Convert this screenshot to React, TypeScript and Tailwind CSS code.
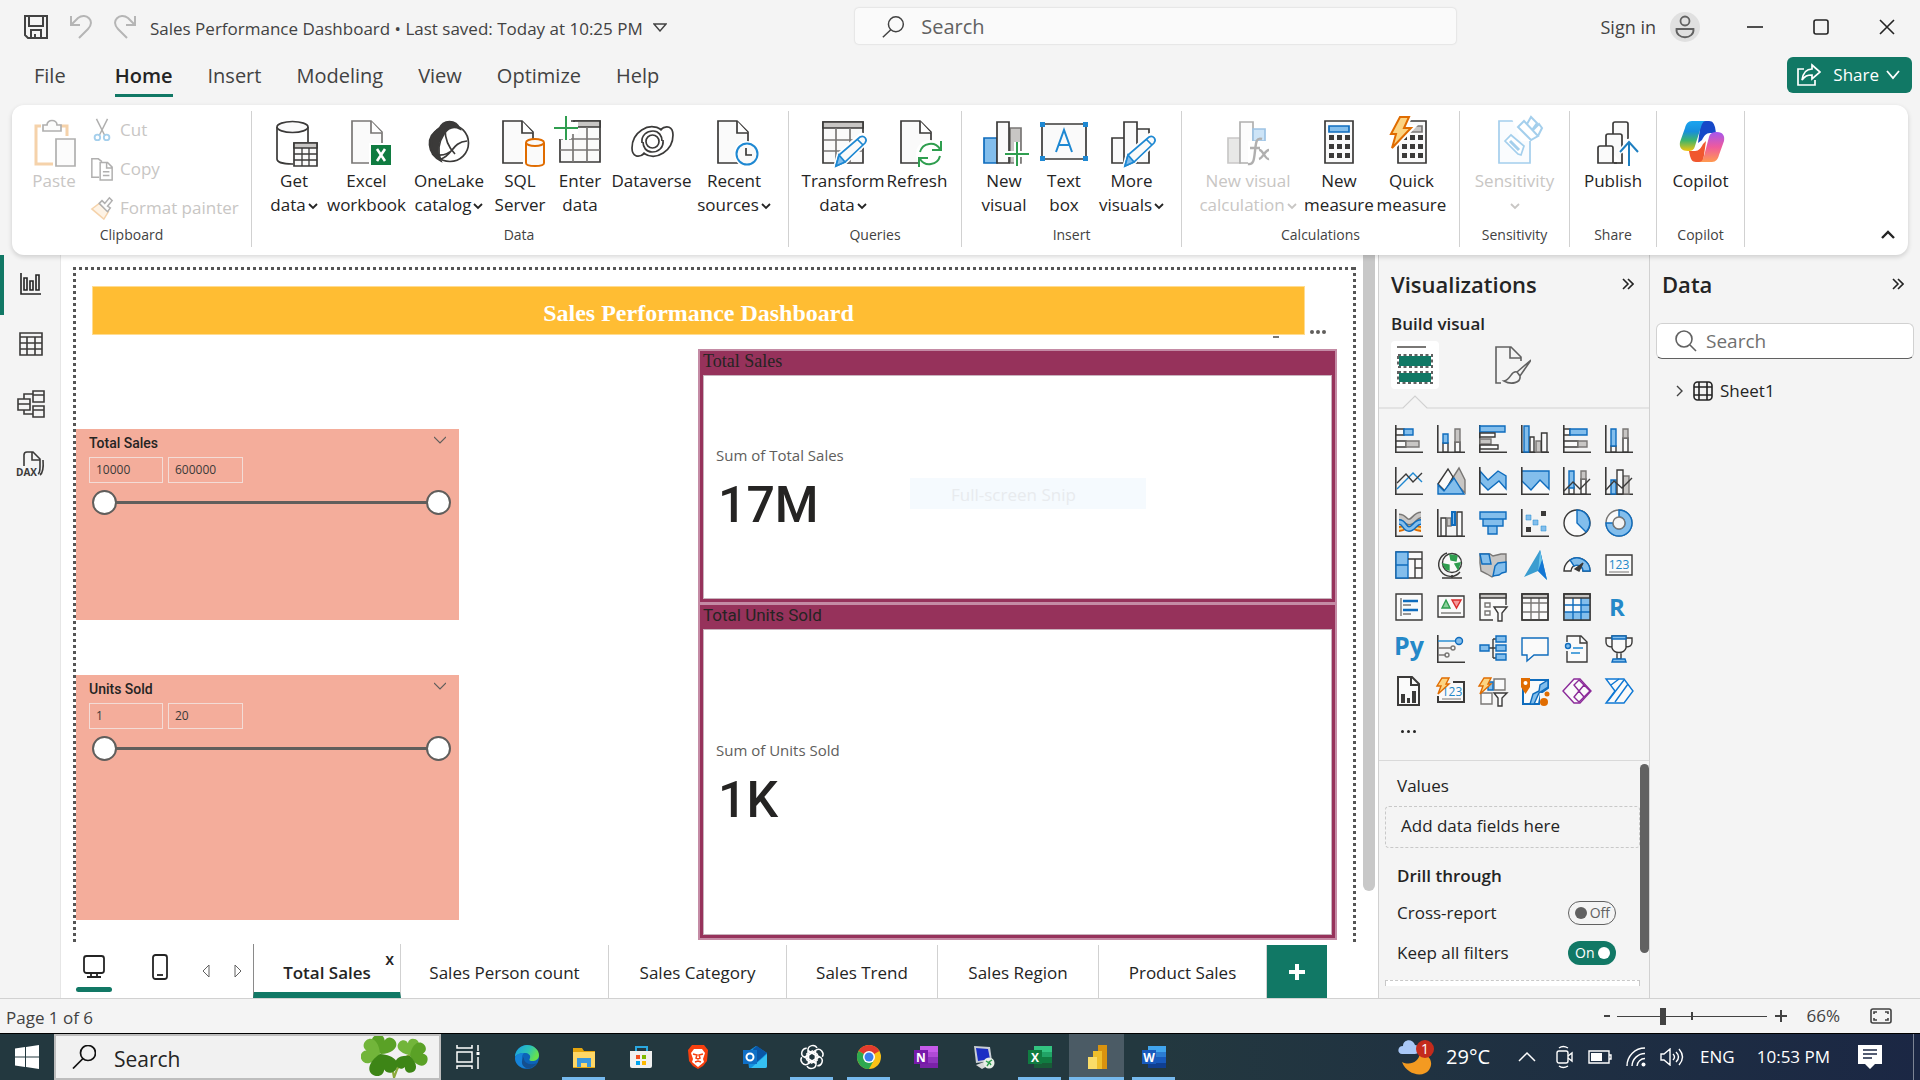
import React from "react";

const INK = "#3b3a39";
const BLUE = "#0f6cbd";
const SKY = "#83beec";
const GRAY = "#c8c6c4";
const MID = "#797775";

type Kids = { children: React.ReactNode };

/* ---------- shared icon frames ---------- */

const Big = ({ children, faded = false }: Kids & { faded?: boolean }) => (
  <svg
    viewBox="0 0 48 52"
    className={faded ? "h-[52px] w-12 shrink-0 overflow-visible opacity-40" : "h-[52px] w-12 shrink-0 overflow-visible"}
    fill="none"
    stroke={INK}
    strokeWidth="1.7"
  >
    {children}
  </svg>
);

const Viz = ({ children }: Kids) => (
  <svg viewBox="0 0 28 28" className="size-7 overflow-visible" fill="none" stroke={INK} strokeWidth="1.4">
    {children}
  </svg>
);

const Axis = () => <path d="M.8 0V27.2H28" strokeWidth="1.6" />;

const Caret = ({ className = "" }: { className?: string }) => (
  <svg viewBox="0 0 10 8" className={"inline h-2 w-2.5 " + className} fill="none" stroke="currentColor" strokeWidth="1.8">
    <path d="M1 2l4 4 4-4" />
  </svg>
);

const Page = ({ x = 8 }: { x?: number }) => (
  <g transform={`translate(${x} 0)`}>
    <path d="M0 4h19l11 11v31H0z" fill="#fafafa" />
    <path d="M19 4v12h11" fill="#fff" />
  </g>
);

const Pencil = () => (
  <g>
    <path d="M17 49l3-11 21-19c4-2 8 2 6 6L26 45z" fill="#fafafa" stroke="#fff" strokeWidth="5" />
    <path d="M17 49l3-11 21-18c4-2 8 2 5 6L26 45z" fill="#fafafa" stroke="#1e88d2" />
    <path d="M17 49l3-11 6 7z" fill={SKY} stroke="#1e88d2" />
    <path d="M38 22l6 6" stroke="#1e88d2" />
  </g>
);

const Plus = ({ cx, cy }: { cx: number; cy: number }) => (
  <g transform={`translate(${cx} ${cy})`}>
    <path d="M-12 0h24M0-12v24" stroke="#fff" strokeWidth="6" />
    <path d="M-12 0h24M0-12v24" stroke="#2f9e4f" strokeWidth="2" />
  </g>
);

const bolt = "M12 0h9l-5 11h7L4 31l4-14H3z";

/* ---------- ribbon icons ---------- */

const IcoPaste = () => (
  <Big faded>
    <path d="M11 9H6v38h17M29 9h8v10" stroke="#e8912d" strokeWidth="3" />
    <path d="M13 14V8h4c0-6 10-6 10 0h4v6z" fill="#fafafa" />
    <path d="M26 22h19v27H26z" fill="#fafafa" />
  </Big>
);
const IcoGet = () => (
  <Big>
    <path d="M7 10v32c0 3 6 5 15 5h1M38 10v15" />
    <ellipse cx="22.500" cy="10" rx="15.500" ry="5.500" fill="#fafafa" />
    <path d="M24 26h23v23H24z" fill="#fafafa" />
    <path d="M24 26h23v5H24z" fill={GRAY} />
    <path d="M24 37h23M24 43h23M32 31v18M39 31v18" strokeWidth="1.300" />
  </Big>
);
const IcoExcel = () => (
  <Big>
    <g stroke={MID}>
      <Page x={9} />
    </g>
    <path d="M26 26h23v23H26z" fill="#fff" stroke="none" />
    <path d="M28 28h20v20H28z" fill="#107c41" stroke="none" />
    <path d="M34 32l8 12M42 32l-8 12" stroke="#fff" strokeWidth="2.600" />
  </Big>
);
const IcoOneLake = () => (
  <Big>
    <path d="M14 12C18 2 31 2 35 12c-6-3-12-1-16 5-6 9-7 17-3 27C2 37 0 19 14 12z" fill={INK} />
    <circle cx="25" cy="26" r="18.500" />
    <path d="M20 12c0 12 4 19 10 25M16 42c12-4 11-17 26-18M7 37c10 3 17 0 22-6" />
  </Big>
);
const IcoSql = () => (
  <Big>
    <Page x={7} />
    <path d="M27 22h23v29H27z" fill="#fff" stroke="none" />
    <path d="M30 26v20c0 4 18 4 18 0V26" fill="#fafafa" stroke="#e06c00" strokeWidth="2" />
    <ellipse cx="39" cy="25.500" rx="9" ry="3.500" fill="#fafafa" stroke="#e06c00" strokeWidth="2" />
  </Big>
);
const IcoEnter = () => (
  <Big>
    <path d="M4 4h40v41H4z" fill="#fafafa" />
    <path d="M18 4h26v6H18z" fill={GRAY} />
    <path d="M4 22h40M4 33h40M17 10v35M31 10v35" stroke={MID} />
    <path d="M0 0h15v22H0zM0 5h22v12H0z" fill="#fff" stroke="none" />
    <Plus cx={10} cy={11} />
  </Big>
);
const swirl = "M34 13C20 4 4 16 4 31c0 8 6 11 13 5M14 26c-1-8 5-12 11-12 6 0 9 5 9 10";
const IcoDataverse = () => (
  <Big>
    <path d={swirl} />
    <path d={swirl} transform="rotate(180 24.5 24.5)" />
    <circle cx="24.500" cy="24.500" r="6.500" />
  </Big>
);
const IcoRecent = () => (
  <Big>
    <Page x={8} />
    <circle cx="37" cy="37" r="13" fill="#fff" stroke="none" />
    <circle cx="37" cy="37" r="10.500" fill="#fafafa" stroke="#1e88d2" strokeWidth="2" />
    <path d="M36 31v7h6" />
  </Big>
);
const IcoTransform = () => (
  <Big>
    <path d="M4 5h40v41H4z" fill="#fafafa" />
    <path d="M4 5h40v6H4z" fill={GRAY} />
    <path d="M5 23h38M5 34h38M17 11v34M31 11v34" stroke={MID} />
    <Pencil />
  </Big>
);
const IcoRefresh = () => (
  <Big>
    <Page x={8} />
    <circle cx="37" cy="37" r="14" fill="#fff" stroke="none" />
    <path d="M27 35a11 11 0 0 1 20-3M47 39a11 11 0 0 1-20 3M48 24v9h-9M26 50v-9h9" stroke="#2f9e4f" strokeWidth="2" />
  </Big>
);
const IcoNewVisual = () => (
  <Big>
    <path d="M30 11h11v35H30z" fill={GRAY} stroke={MID} />
    <path d="M4 21h13v25H4z" fill={SKY} stroke={BLUE} />
    <path d="M17 5h12v41H17z" fill="#fafafa" />
    <Plus cx={37} cy={37} />
  </Big>
);
const IcoTextBox = () => (
  <Big>
    <path d="M2 7h44v35H2z" fill="#fafafa" />
    <path d="M0 5h5v5H0zM43 5h5v5h-5zM0 39h5v5H0zM43 39h5v5h-5z" fill="#1e88d2" stroke="none" />
    <path d="M16 35l8-22 8 22M19 28h10" stroke="#1e88d2" strokeWidth="2" />
  </Big>
);
const IcoMoreVisuals = () => (
  <Big>
    <path d="M4 21h12v25H4zM16 5h13v41H16zM29 12h12v34H29z" fill="#fafafa" />
    <Pencil />
  </Big>
);
const IcoNewCalc = () => (
  <Big faded>
    <path d="M4 21h12v25H4z" fill={GRAY} stroke={MID} />
    <path d="M16 5h13v41H16z" fill="#fafafa" />
    <path d="M29 12h12v12H29z" fill={SKY} stroke={BLUE} />
    <path d="M24 24h22v26H24z" fill="#fff" stroke="none" />
    <path d="M38 22c-6-2-6 4-7 12s-1 14-7 13M26 31h10M35 33c4-1 6 10 10 9M45 33c-4 0-6 8-10 9" strokeWidth="2.400" />
  </Big>
);
const Calc = ({ x, screen = SKY, edge = BLUE }: { x: number; screen?: string; edge?: string }) => (
  <g transform={`translate(${x} 0)`}>
    <path d="M0 4h28v42H0z" fill="#fafafa" />
    <path d="M4 9h20v6H4z" fill={screen} stroke={edge} />
    {[18, 27, 36].map((y) => (
      <path key={y} d={`M4 ${y}h5v5H4zM12 ${y}h5v5h-5zM20 ${y}h5v5h-5z`} fill={INK} stroke="none" />
    ))}
  </g>
);
const IcoNewMeasure = () => (
  <Big>
    <Calc x={10} />
  </Big>
);
const IcoQuick = () => (
  <Big>
    <Calc x={10} screen={GRAY} edge={MID} />
    <path d={bolt} fill="#fff" stroke="#fff" strokeWidth="6" />
    <path d={bolt} fill="#fcd482" stroke="#e06c00" strokeWidth="2" />
  </Big>
);
const IcoSensitivity = () => (
  <Big faded>
    <g stroke="#1e88d2">
      <path d="M8 4h31v42H8z" fill="#f3f9fd" />
      <path d="M21 2h28v22H30z" fill="#fff" stroke="none" />
      <path d="M14 24l6-6 13 11-3 9-3-1z" fill="#fff" />
      <path d="M19 24l9 9" strokeWidth="3" />
      <path d="M27 10l13 13 7-4-14-15zM27 10l6-6M36 7l4-7 6 6-5 7M41 14l7-7 3 4-4 8" fill="#fff" strokeWidth="2" />
    </g>
  </Big>
);
const IcoPublish = () => (
  <Big>
    <path d="M28 46H9V31q0-2 2-2h11q2 0 2 2v15M17 29V19q0-2 2-2h12q2 0 2 2v27M24 17V7q0-2 2-2h11q2 0 2 2v15" fill="#fafafa" />
    <path d="M25 46h9" />
    <path d="M40 49V26M31 35l9-10 9 10" stroke="#fff" strokeWidth="5" />
    <path d="M40 49V26M31 35l9-10 9 10" stroke="#1e7fc0" strokeWidth="2" />
  </Big>
);
const IcoCopilot = () => (
  <Big>
    <defs>
      <linearGradient id="cpA" x1="0" y1="0" x2="0" y2="1">
        <stop offset="0" stopColor="#1aa5f0" />
        <stop offset=".35" stopColor="#178fdc" />
        <stop offset=".65" stopColor="#3fb56b" />
        <stop offset="1" stopColor="#f2c40f" />
      </linearGradient>
      <linearGradient id="cpB" x1="0" y1="0" x2="0" y2="1">
        <stop offset="0" stopColor="#a457ee" />
        <stop offset=".5" stopColor="#ef5a9d" />
        <stop offset="1" stopColor="#ff9a50" />
      </linearGradient>
    </defs>
    <g stroke="none">
      <path d="M24 4h8c4 0 5 3 6 6l1 6h-6c-4 0-6 3-8 7l-4 3z" fill="#1648c8" />
      <path d="M26 45h-7c-4 0-5-3-6-6l-1-5h6c4 0 6-3 8-7l3-3z" fill="#f0572e" />
      <path d="M15 4h14c-3 0-4 3-5 6l-6 19c-1 4-3 5-7 5-6 0-9-3-8-9l5-14c1-4 3-7 7-7z" fill="url(#cpA)" />
      <path d="M35 45H22c3 0 4-3 5-6l5-19c1-4 4-5 8-5 6 0 8 4 7 9l-5 14c-1 4-3 7-7 7z" fill="url(#cpB)" />
    </g>
  </Big>
);

/* ---------- ribbon ---------- */

type Tool = { icon: React.ReactNode; l1: string; l2?: string; caret?: boolean; w: string; off?: boolean };
type Group = { name: string; tools: Tool[]; pad: string };

const groups: Group[] = [
  {
    name: "Data",
    pad: "pl-2.5 pr-3",
    tools: [
      { icon: <IcoGet />, l1: "Get", l2: "data", caret: true, w: "w-16" },
      { icon: <IcoExcel />, l1: "Excel", l2: "workbook", w: "w-[81px]" },
      { icon: <IcoOneLake />, l1: "OneLake", l2: "catalog", caret: true, w: "w-[84px]" },
      { icon: <IcoSql />, l1: "SQL", l2: "Server", w: "w-[58px]" },
      { icon: <IcoEnter />, l1: "Enter", l2: "data", w: "w-[62px]" },
      { icon: <IcoDataverse />, l1: "Dataverse", w: "w-[81px]" },
      { icon: <IcoRecent />, l1: "Recent", l2: "sources", caret: true, w: "w-[84px]" },
    ],
  },
  {
    name: "Queries",
    pad: "px-3",
    tools: [
      { icon: <IcoTransform />, l1: "Transform", l2: "data", caret: true, w: "w-[84px]" },
      { icon: <IcoRefresh />, l1: "Refresh", w: "w-16" },
    ],
  },
  {
    name: "Insert",
    pad: "px-3",
    tools: [
      { icon: <IcoNewVisual />, l1: "New", l2: "visual", w: "w-[60px]" },
      { icon: <IcoTextBox />, l1: "Text", l2: "box", w: "w-[60px]" },
      { icon: <IcoMoreVisuals />, l1: "More", l2: "visuals", caret: true, w: "w-[75px]" },
    ],
  },
  {
    name: "Calculations",
    pad: "px-2.5",
    tools: [
      { icon: <IcoNewCalc />, l1: "New visual", l2: "calculation", caret: true, w: "w-[112px]", off: true },
      { icon: <IcoNewMeasure />, l1: "New", l2: "measure", w: "w-[70px]" },
      { icon: <IcoQuick />, l1: "Quick", l2: "measure", w: "w-[75px]" },
    ],
  },
  { name: "Sensitivity", pad: "px-2.5", tools: [{ icon: <IcoSensitivity />, l1: "Sensitivity", l2: "", caret: true, w: "w-[89px]", off: true }] },
  { name: "Share", pad: "px-2", tools: [{ icon: <IcoPublish />, l1: "Publish", w: "w-[70px]" }] },
  { name: "Copilot", pad: "px-2", tools: [{ icon: <IcoCopilot />, l1: "Copilot", w: "w-[71px]" }] },
];

const ToolButton = ({ t }: { t: Tool }) => (
  <button
    type="button"
    className={
      "flex shrink-0 flex-col items-center whitespace-nowrap text-[17px] leading-6 " +
      t.w +
      (t.off ? " text-[#c8c6c4]" : " text-[#242424]")
    }
  >
    {t.icon}
    <span>{t.l1}</span>
    <span>
      {t.l2}
      {t.caret && <Caret className={t.l2 ? "ml-0.5" : ""} />}
    </span>
  </button>
);

const clip = "flex items-center gap-1.5 text-[17px] leading-6";

const Ribbon = () => (
  <section
    aria-label="Ribbon"
    className="relative z-10 mx-3 flex h-[150px] rounded-xl bg-white pb-2 pt-1.5 shadow-[0_2px_5px_rgba(0,0,0,0.16)]"
  >
    <div className="flex w-60 flex-col border-r border-[#d1d1d1] pt-1.5 text-[#c8c6c4]">
      <div className="flex flex-1 pl-4">
        <button type="button" className="flex w-[52px] flex-col items-center text-[17px] leading-6">
          <IcoPaste />
          Paste
        </button>
        <div className="flex flex-col gap-[15px] pl-2.5 pt-px">
          <button type="button" className={clip}>
            <svg viewBox="0 0 24 26" className="h-6 w-6 opacity-40" fill="none" stroke={INK} strokeWidth="1.600">
              <path d="M6 1l9 18M18 1L9 19" />
              <circle cx="7" cy="21" r="3" stroke="#1e88d2" strokeWidth="2" />
              <circle cx="17" cy="21" r="3" stroke="#1e88d2" strokeWidth="2" />
            </svg>
            Cut
          </button>
          <button type="button" className={clip}>
            <svg viewBox="0 0 24 26" className="h-6 w-6 opacity-40" fill="none" stroke={INK} strokeWidth="1.600">
              <path d="M9 22H1V2h7l4 3" />
              <path d="M10 6h8l5 5v14H10zM17 6v6h6M13 16h7M13 20h7" />
            </svg>
            Copy
          </button>
          <button type="button" className={clip}>
            <svg viewBox="0 0 24 26" className="h-6 w-6 opacity-40" fill="none" stroke={INK} strokeWidth="1.600">
              <path d="M9 8l10 9-5 8L1 14z" fill="#fde3c0" stroke="#e8912d" />
              <path d="M9 8l3-3 3 3 5-6 3 3-5 6 3 2-3 4z" fill="#fafafa" />
            </svg>
            Format painter
          </button>
        </div>
      </div>
      <div className="text-center text-sm leading-6 text-[#424242]">Clipboard</div>
    </div>
    {groups.map((g) => (
      <div key={g.name} className={"flex flex-col border-r border-[#d1d1d1] pt-1.5 " + g.pad}>
        <div className="flex flex-1">
          {g.tools.map((t) => (
            <ToolButton key={t.l1 + t.l2} t={t} />
          ))}
        </div>
        <div className="text-center text-sm leading-6 text-[#424242]">{g.name}</div>
      </div>
    ))}
    <button type="button" aria-label="Collapse ribbon" className="mb-1.5 mr-3 ml-auto self-end">
      <svg viewBox="0 0 16 12" className="h-3 w-4" fill="none" stroke="#242424" strokeWidth="2.400">
        <path d="M2 9l6-6 6 6" />
      </svg>
    </button>
  </section>
);

/* ---------- header ---------- */

const menu = ["File", "Home", "Insert", "Modeling", "View", "Optimize", "Help"];

const Header = () => (
  <header className="h-[105px] text-[#424242]">
    <div className="grid h-[54px] grid-cols-[855px_1fr_464px] items-center">
      <div className="flex items-center pl-6">
        <button type="button" aria-label="Save">
          <svg viewBox="0 0 24 24" className="size-6" fill="none" stroke="#424242" strokeWidth="2">
            <path d="M1 1h22v22H4l-3-3zM5 1v10h14V1M7 23v-8h10v8M11 23v-4" />
          </svg>
        </button>
        <button type="button" aria-label="Undo" className="ml-[22px]">
          <svg viewBox="0 0 22 24" className="h-6 w-[22px]" fill="none" stroke="#b5b5b5" strokeWidth="2">
            <path d="M1 1v9h9M1 10L8 3c8-6 18 3 10 11l-9 9" />
          </svg>
        </button>
        <button type="button" aria-label="Redo" className="ml-[22px]">
          <svg viewBox="0 0 22 24" className="h-6 w-[22px]" fill="none" stroke="#b5b5b5" strokeWidth="2">
            <path d="M21 1v9h-9M21 10l-7-7C6-3-4 6 4 14l9 9" />
          </svg>
        </button>
        <h1 className="ml-3.5 mt-1 whitespace-nowrap text-[17px] leading-6">
          Sales Performance Dashboard • Last saved: Today at 10:25 PM
        </h1>
        <button type="button" aria-label="File details" className="ml-2.5">
          <svg viewBox="0 0 14 9" className="h-[9px] w-3.5" fill="none" stroke="#424242" strokeWidth="1.400">
            <path d="M1 1h12L7 8z" />
          </svg>
        </button>
      </div>
      <label className="mb-2.5 mt-2 flex h-9 items-center rounded bg-[#fafafa] pl-[26px] pt-0.5 shadow-[0_0_2px_rgba(0,0,0,0.2)]">
        <svg viewBox="0 0 26 24" className="h-6 w-[26px]" fill="none" stroke="#424242" strokeWidth="1.600">
          <circle cx="16" cy="9" r="8" />
          <path d="M10.500 15L2 23" />
        </svg>
        <input aria-label="Search" placeholder="Search" className="ml-4 w-full bg-transparent text-xl leading-7 outline-none placeholder:text-[#616161]" />
      </label>
      <div className="flex items-center justify-end pr-[25px]">
        <a href="#signin" className="text-lg leading-6">
          Sign in
        </a>
        <span className="ml-3.5 flex size-[30px] items-center justify-center rounded-full bg-[#e0e0e0]">
          <svg viewBox="0 0 20 24" className="h-6 w-5" fill="none" stroke="#616161" strokeWidth="1.800">
            <circle cx="10" cy="6" r="4.500" />
            <path d="M1.500 14h17c1 11-18 11-17 0z" />
          </svg>
        </span>
        <button type="button" aria-label="Minimize" className="ml-[47px]">
          <svg viewBox="0 0 16 16" className="size-4" stroke="#242424" strokeWidth="1.600">
            <path d="M0 8h16" />
          </svg>
        </button>
        <button type="button" aria-label="Maximize" className="ml-[50px]">
          <svg viewBox="0 0 16 16" className="size-4" fill="none" stroke="#242424" strokeWidth="1.600">
            <rect x="1" y="1" width="14" height="14" rx="2" />
          </svg>
        </button>
        <button type="button" aria-label="Close" className="ml-[50px]">
          <svg viewBox="0 0 16 16" className="size-4" fill="none" stroke="#242424" strokeWidth="1.600">
            <path d="M1 1l14 14M15 1L1 15" />
          </svg>
        </button>
      </div>
    </div>
    <div className="flex items-start justify-between pl-[34px] pr-2 pt-[3px]">
      <nav className="flex gap-[35px] text-xl">
        {menu.map((m) => (
          <button
            key={m}
            type="button"
            className={
              m === "Home"
                ? "ml-3.5 flex h-10 items-center border-b-[3px] border-[#117865] font-semibold text-[#242424]"
                : "flex h-10 items-center border-b-[3px] border-transparent"
            }
          >
            {m}
          </button>
        ))}
      </nav>
      <button type="button" className="flex h-9 items-center rounded-md bg-[#117865] pl-2.5 pr-3 text-[17px] text-white">
        <svg viewBox="0 0 24 24" className="size-6" fill="none" stroke="#fff" strokeWidth="1.700">
          <path d="M7 6H1v16h17v-5" />
          <path d="M15 2l8 7-8 7v-4c-5 0-7 1-10 5 1-7 4-11 10-11z" />
        </svg>
        <span className="ml-3">Share</span>
        <svg viewBox="0 0 14 10" className="ml-[7px] h-2.5 w-3.5" fill="none" stroke="#fff" strokeWidth="1.800">
          <path d="M1 1l6 7 6-7" />
        </svg>
      </button>
    </div>
  </header>
);

/* ---------- left rail ---------- */

const Rail = () => (
  <nav aria-label="Views" className="w-[61px] shrink-0 border-r border-[#e6e6e6]">
    {[
      <svg key="r" viewBox="0 0 22 22" className="size-[22px]" fill="none" stroke="#242424" strokeWidth="1.600">
        <path d="M1 0v21h20M4 5h3v12H4zM10 8h3v9h-3zM16 2h3v15h-3z" />
      </svg>,
      <svg key="t" viewBox="0 0 24 24" className="size-6" fill="none" stroke={INK} strokeWidth="1.600">
        <path d="M1 1h22v22H1zM1 5h22M1 11h22M1 17h22M8 5v18M16 5v18" />
      </svg>,
      <svg key="m" viewBox="0 0 28 28" className="size-7" fill="none" stroke={INK} strokeWidth="1.600">
        <path d="M16 1h11v11H16zM16 5h11M1 9h12v11H1zM1 14h12M16 16h11v11H16zM16 20h11M7 9V4h9M7 20v4h9" />
      </svg>,
      <svg key="d" viewBox="0 0 28 26" className="h-[26px] w-7 overflow-visible" fill="none" stroke={INK} strokeWidth="1.600">
        <path d="M7 15V4q0-3 3-3h6l7 7v8q0 6-2 7M15 1v8h8M26 9q1 12-3 15" />
        <text x="-1" y="25" fontSize="10" fontWeight="700" fill={INK} stroke="none">
          DAX
        </text>
      </svg>,
    ].map((icon, i) => (
      <button
        key={i}
        type="button"
        aria-label={["Report view", "Table view", "Model view", "DAX query view"][i]}
        className={
          i === 0
            ? "flex h-[60px] w-full items-center justify-center border-l-4 border-[#117865] pb-0.5 pr-0.5"
            : "flex h-[60px] w-full items-center justify-center pb-0.5 pl-0.5"
        }
      >
        {icon}
      </button>
    ))}
  </nav>
);

/* ---------- report canvas ---------- */

const thumb =
  "pointer-events-none absolute inset-x-0 top-0 h-6 w-full appearance-none bg-transparent [&::-webkit-slider-thumb]:pointer-events-auto [&::-webkit-slider-thumb]:size-[25px] [&::-webkit-slider-thumb]:appearance-none [&::-webkit-slider-thumb]:rounded-full [&::-webkit-slider-thumb]:border-2 [&::-webkit-slider-thumb]:border-[#605e5c] [&::-webkit-slider-thumb]:bg-white";

const Slicer = ({ title, lo, hi, place }: { title: string; lo: string; hi: string; place: string }) => (
  <section className={"absolute bg-[#f4ad9b] pl-[13px] pr-2 pt-1 text-[#252423] " + place}>
    <div className="flex items-center justify-between pr-[5px]">
      <h3 className="font-[Roboto] text-sm font-medium leading-5">{title}</h3>
      <svg viewBox="0 0 12 8" className="mb-1.5 h-2 w-3" fill="none" stroke="#605e5c" strokeWidth="1.200">
        <path d="M0 1l6 6 6-6" />
      </svg>
    </div>
    <div className="mt-1 flex gap-[5px]">
      <input aria-label={title + " minimum"} defaultValue={lo} className="h-[26px] w-[74px] border border-[#f3dcd6] px-1.5 pb-0.5 text-xs text-[#3b3a39]" />
      <input aria-label={title + " maximum"} defaultValue={hi} className="h-[26px] w-[75px] border border-[#f3dcd6] px-1.5 pb-0.5 text-xs text-[#3b3a39]" />
    </div>
    <div className="relative ml-[3px] mt-[7px] h-6">
      <div className="absolute inset-x-3 top-[11px] h-[3px] bg-[#605e5c]" />
      <input type="range" aria-label={title + " from"} defaultValue={0} className={thumb} />
      <input type="range" aria-label={title + " to"} defaultValue={100} className={thumb} />
    </div>
  </section>
);

const Card = ({ title, label, value, place, serif }: { title: string; label: string; value: string; place: string; serif?: boolean }) => (
  <section className={"absolute flex flex-col border-2 border-[#c48ba5] bg-[#96325b] px-[3px] pb-[3px] " + place}>
    <h3
      className={
        serif
          ? "h-6 font-['Liberation_Serif'] text-lg leading-5 text-[#252423]"
          : "h-6 font-[Roboto] text-[17px] leading-5 text-[#252423]"
      }
    >
      {title}
    </h3>
    <div className="flex flex-1 flex-col justify-center border border-[#c8b3bd] bg-white pl-3">
      <p className="pt-2 text-[15px] leading-6 text-[#605e5c]">{label}</p>
      <p className="ml-0.5 mt-1 font-[Roboto] text-[50px] font-medium leading-[68px] text-[#252423]">{value}</p>
    </div>
  </section>
);

const Canvas = () => (
  <div className="flex flex-1">
    <div className="relative flex-1 overflow-hidden">
      <div className="absolute left-3 right-[7px] top-3 h-[3px] bg-[repeating-linear-gradient(90deg,#555_0_3px,transparent_3px_6px)]" />
      <div className="absolute bottom-0 left-3 top-3 w-[3px] bg-[repeating-linear-gradient(180deg,#555_0_3px,transparent_3px_6px)]" />
      <div className="absolute bottom-0 right-[7px] top-3 w-[3px] bg-[repeating-linear-gradient(180deg,#555_0_3px,transparent_3px_6px)]" />
      <div className="absolute left-[1212px] top-[81px] h-0.5 w-1.5 bg-[#797775]" />
      <h2 className="absolute left-[31px] top-[31px] flex h-[49px] w-[1213px] items-center justify-center border border-[#ffdc91] bg-[#ffbd33] pt-1 font-['Liberation_Serif'] text-2xl font-bold text-white">
        Sales Performance Dashboard
      </h2>
      <div className="absolute left-[1249px] top-[75px] flex gap-0.5">
        <span className="size-1 rounded-full bg-[#605e5c]" />
        <span className="size-1 rounded-full bg-[#605e5c]" />
        <span className="size-1 rounded-full bg-[#605e5c]" />
      </div>
      <Slicer title="Total Sales" lo="10000" hi="600000" place="left-[15px] top-[174px] h-[191px] w-[383px]" />
      <Slicer title="Units Sold" lo="1" hi="20" place="left-[15px] top-[420px] h-[245px] w-[383px]" />
      <Card serif title="Total Sales" label="Sum of Total Sales" value="17M" place="left-[637px] top-[94px] h-[255px] w-[639px]" />
      <Card title="Total Units Sold" label="Sum of Units Sold" value="1K" place="left-[637px] top-[348px] h-[337px] w-[639px]" />
      <div className="absolute left-[849px] top-[223px] flex h-[31px] w-[236px] items-center bg-[#f5fafe] pl-[41px] pt-0.5 text-[17px] text-[#e8ebee]">
        Full-screen Snip
      </div>
    </div>
    <div className="w-[15px]">
      <div className="h-[636px] w-3 rounded-b-md bg-[#c8c8c8]" />
    </div>
  </div>
);

const tabs: [string, string][] = [
  ["Sales Person count", "w-[208px]"],
  ["Sales Category", "w-[178px]"],
  ["Sales Trend", "w-[151px]"],
  ["Sales Region", "w-[161px]"],
  ["Product Sales", "w-[168px]"],
];

const Tabs = () => (
  <div className="flex h-[54px] text-[17px] text-[#242424]">
    <div className="flex w-48 shrink-0 items-start pl-[15px]">
      <button type="button" aria-label="Desktop layout" className="flex w-9 flex-col items-center pt-2.5">
        <svg viewBox="0 0 22 24" className="h-6 w-[22px]" fill="none" stroke="#242424" strokeWidth="1.800">
          <rect x="1" y="2" width="20" height="17" rx="2.500" />
          <path d="M8 19v3M14 19v3M4 23h14" />
        </svg>
        <span className="mt-[9px] h-[5px] w-9 rounded-full bg-[#117865]" />
      </button>
      <button type="button" aria-label="Mobile layout" className="ml-10 mt-2.5">
        <svg viewBox="0 0 16 26" className="h-[26px] w-4" fill="none" stroke="#242424" strokeWidth="1.800">
          <rect x="1" y="1" width="14" height="24" rx="2.500" />
          <path d="M5 21h6" />
        </svg>
      </button>
      <button type="button" aria-label="Previous pages" className="ml-[34px] mt-5">
        <svg viewBox="0 0 8 14" className="h-3.5 w-2" fill="none" stroke="#616161">
          <path d="M7 1v12L1 7z" />
        </svg>
      </button>
      <button type="button" aria-label="Next pages" className="ml-6 mt-5">
        <svg viewBox="0 0 8 14" className="h-3.5 w-2" fill="none" stroke="#616161">
          <path d="M1 1v12l6-6z" />
        </svg>
      </button>
    </div>
    <div className="relative flex w-[148px] items-center justify-center border-b-[6px] border-l border-r border-b-[#117865] border-l-[#8a8a8a] border-r-[#d1d1d1] pt-2.5 font-semibold">
      <button type="button">Total Sales</button>
      <button type="button" aria-label="Close page" className="absolute right-1.5 top-[5px] text-base leading-5">
        x
      </button>
    </div>
    {tabs.map(([t, w]) => (
      <button key={t} type="button" className={"mt-px border-r border-[#d1d1d1] pt-0.5 whitespace-nowrap " + w}>
        {t}
      </button>
    ))}
    <button type="button" aria-label="New page" className="mt-px flex w-[60px] items-center justify-center bg-[#117865]">
      <svg viewBox="0 0 16 16" className="size-4" stroke="#fff" strokeWidth="4">
        <path d="M0 8h16M8 0v16" />
      </svg>
    </button>
  </div>
);

/* ---------- visualization gallery ---------- */

const W = "#fafafa";
const LETTER = "#2488c8";

const gallery: [string, React.ReactNode][] = [
  ["Stacked bar chart", <><Axis /><path d="M1 4h8v6H1z" fill={W} /><path d="M9 4h9v6H9z" fill={SKY} stroke={BLUE} /><path d="M1 16h10v6H1z" fill={W} /><path d="M11 16h13v6H11z" fill={GRAY} stroke={MID} /></>],
  ["Stacked column chart", <><Axis /><path d="M6 18h5v9H6zM18 17h5v10h-5z" fill={W} /><path d="M6 9h5v9H6z" fill={SKY} stroke={BLUE} /><path d="M18 4h5v13h-5z" fill={GRAY} stroke={MID} /></>],
  ["Clustered bar chart", <><Axis /><path d="M1 1h25v6H1z" fill={SKY} stroke={BLUE} /><path d="M1 8h15v4H1z" fill={W} /><path d="M1 14h11v5H1z" fill={GRAY} stroke={MID} /><path d="M1 20h18v4H1z" fill={W} /></>],
  ["Clustered column chart", <><Axis /><path d="M3 1h5v26H3z" fill={SKY} stroke={BLUE} /><path d="M9 12h4v15H9z" fill={W} /><path d="M15 16h5v11h-5z" fill={GRAY} stroke={MID} /><path d="M20.500 8H26v19h-5.500z" fill={W} /></>],
  ["100% stacked bar chart", <><Axis /><path d="M1 4h6v6H1z" fill={W} /><path d="M7 4h17v6H7z" fill={SKY} stroke={BLUE} /><path d="M1 16h14v6H1z" fill={W} /><path d="M15 16h9v6h-9z" fill={GRAY} stroke={MID} /></>],
  ["100% stacked column chart", <><Axis /><path d="M6 21h5v6H6zM18 13h5v14h-5z" fill={W} /><path d="M6 4h5v17H6z" fill={SKY} stroke={BLUE} /><path d="M18 4h5v9h-5z" fill={GRAY} stroke={MID} /></>],

  ["Line chart", <><Axis /><path d="M2 22L18 6l9 9" stroke="#1e88d2" /><path d="M2 16l9-9 7 8 9-9" /></>],
  ["Area chart", <><path d="M15 12L22 1l6 12v13z" fill={GRAY} stroke={MID} /><path d="M1 17l10-15 5 8L8 24l-7-7z" fill={W} /><path d="M1 27V18l6 6L17 11l10 16z" fill={SKY} stroke={BLUE} /></>],
  ["Stacked area chart", <><path d="M1 15l9 8 10-10 8 8v6H1z" fill={W} stroke="none" /><path d="M1 4l8 9L19 4l8 5v13l-7-8-11 9-8-8z" fill={SKY} stroke={BLUE} /><Axis /></>],
  ["100% stacked area chart", <><path d="M1 14l9 9 9-10 9 9v5H1z" fill={W} stroke="none" /><path d="M1 4h27v18l-9-9-9 10-9-9" fill={SKY} stroke={BLUE} /><Axis /></>],
  ["Line and stacked column chart", <><Axis /><path d="M6 20h5v7H6zM18 12h5v15h-5z" fill={W} /><path d="M6 4h5v17H6z" fill={SKY} stroke={BLUE} /><path d="M18 4h5v8h-5z" fill={GRAY} stroke={MID} /><path d="M1 24l9-9 7 7 10-10" /></>],
  ["Line and clustered column chart", <><Axis /><path d="M6 13h5v14H6z" fill={SKY} stroke={BLUE} /><path d="M18 9h6v18h-6z" fill={GRAY} stroke={MID} /><path d="M12 3h6v24h-6z" fill={W} /><path d="M1 23l8-9 8 7L27 11" /></>],

  ["Ribbon chart", <><Axis /><path d="M4 20c5 0 7-4 10-4s6 4 12 4" stroke="#e06c00" strokeWidth="6" /><path d="M4 20c5 0 7-4 10-4s6 4 12 4" stroke="#fcd482" strokeWidth="2" /><path d="M4 8c6 0 5 5 10 5s6-7 12-7" stroke={MID} strokeWidth="7" /><path d="M4 8c6 0 5 5 10 5s6-7 12-7" stroke={GRAY} strokeWidth="4" /><path d="M4 13c6 0 5 7 10 7s6-7 12-7" stroke={BLUE} strokeWidth="6" /><path d="M4 13c6 0 5 7 10 7s6-7 12-7" stroke={SKY} strokeWidth="3" /></>],
  ["Waterfall chart", <><Axis /><path d="M4 9h5v18H4zM20 3h5v24h-5z" fill={W} /><path d="M10 9h4v8h-4z" fill={GRAY} stroke={MID} /><path d="M15 3h3v13h-3z" fill={SKY} stroke={BLUE} strokeWidth="2" /></>],
  ["Funnel chart", <path d="M1 3h26v7H1zM4 10h20v7H4zM9 17h9v8H9z" fill={SKY} stroke={BLUE} />],
  ["Scatter chart", <><Axis /><path d="M20 2h5v5h-5zM5 18h5v5H5z" fill={INK} stroke="none" /><path d="M5 6h5v5H5zM12 11h5v5h-5zM20 17h5v5h-5z" fill={SKY} stroke="#1e88d2" strokeWidth=".5" /></>],
  ["Pie chart", <><circle cx="14" cy="14" r="13" fill={W} /><path d="M14 1a13 13 0 0 1 9 22l-9-9z" fill={SKY} stroke={BLUE} /></>],
  ["Donut chart", <><circle cx="14" cy="14" r="13" fill={W} stroke={MID} /><path d="M14 1a13 13 0 1 1-13 13h7a6 6 0 1 0 6-6z" fill={SKY} stroke={BLUE} /><circle cx="14" cy="14" r="6" fill="#f4f4f4" stroke={MID} /></>],

  ["Treemap", <><path d="M1 1h26v26H1z" fill={W} /><path d="M1 1h12v26H1zM1 14h12" fill={SKY} stroke={BLUE} /><path d="M13 8h14M20 8v19M20 17h7" /></>],
  ["Map", <><path d="M10 2a12 12 0 1 0 13 19M5 27h20M15 24v3" /><circle cx="15" cy="12" r="9.500" fill={W} /><path d="M13 4l7 1-1 5-5-1zM6 13l6 1v5l-3-1zM18 13l5-1-2 6z" fill="#2f9e4f" stroke="#2f9e4f" /></>],
  ["Filled map", <><path d="M1 3h10l3 2 8-2h5v17l-8 2-6 4-5-3-6-3-1-8z" fill={GRAY} stroke={MID} /><path d="M1 3h9l2 10H3zM27 11v10l-4 1-3 2-6 1 2-10 3-3z" fill={SKY} stroke={BLUE} /></>],
  ["Azure map", <g stroke="none"><path d="M19-1l7 30-9-9-14 6z" fill="#3a9dd0" /><path d="M19-1l7 30-9-9z" fill="#1477d4" /><path d="M19-1l2 10-4 11z" fill="#6cc5e6" /></g>],
  ["Gauge", <><path d="M1 20a13 13 0 0 1 26 0h-7a6 6 0 0 0-12 0z" fill={W} /><path d="M7 9a13 13 0 0 1 20 11h-7a6 6 0 0 0-9-5z" fill={SKY} stroke={BLUE} /><path d="M12 18l8-6-4 8z" fill={INK} /></>],
  ["Card", <><path d="M1 4h26v20H1z" fill={W} /><text x="14" y="18" fontSize="12" textAnchor="middle" fill={LETTER} stroke="none">123</text><path d="M4 21h20" stroke={MID} strokeWidth="1" /></>],

  ["Multi-row card", <><path d="M1 1h26v26H1z" fill={W} /><path d="M6 5v18M8 12h8M8 21h8" stroke={MID} /><path d="M8 8h15M8 17h15" stroke={BLUE} strokeWidth="2.500" /></>],
  ["KPI", <><path d="M1 3h26v21H1z" fill={W} /><path d="M9 7l4 8H5z" fill="#8ccf9b" stroke="#2f9e4f" /><path d="M15 7h9l-4.500 8z" fill="#f59b9b" stroke="#d92c2c" /><path d="M4 20h20" stroke={MID} /></>],
  ["Slicer", <><path d="M14 27H1V1h26v11" fill={W} /><path d="M1 1h26v4H1z" fill={GRAY} /><path d="M6 10h5v4H6zM6 18h5v4H6z" stroke={MID} /><path d="M15 14h13l-5 6v8h-4v-8z" fill={W} /></>],
  ["Table", <><path d="M1 1h26v26H1z" fill={W} /><path d="M1 10h26M1 19h26M10 5v22M18 5v22" stroke={MID} /><path d="M1 1h26v4H1z" fill={GRAY} /><path d="M1 1h26v26H1z" /></>],
  ["Matrix", <><path d="M1 1h26v26H1z" fill={W} /><path d="M18 5h9v22H1v-8h17z" fill={SKY} stroke="none" /><path d="M1 12h26M1 19h26M10 5v22M18 5v22" stroke={BLUE} /><path d="M1 1h26v4H1z" fill={GRAY} /><path d="M1 1h26v26H1z" /></>],
  ["R script visual", <text x="4" y="23" fontSize="24" fontWeight="700" fill={LETTER} stroke="none">R</text>],

  ["Python visual", <text x="-1" y="20" fontSize="25" fontWeight="700" fill={LETTER} stroke="none">Py</text>],
  ["Key influencers", <><Axis /><path d="M1 6h18" stroke="#1e88d2" /><circle cx="22" cy="6" r="3.500" fill={SKY} stroke={BLUE} /><path d="M1 13h13M1 20h8" stroke={MID} /><circle cx="16" cy="13" r="2" stroke={MID} /><circle cx="10" cy="20" r="2" stroke={MID} /></>],
  ["Decomposition tree", <><path d="M10 13h7M14 4v19M14 4h3M14 23h3" /><path d="M1 10h9v6H1zM17 1h10v6H17zM17 10h10v6H17zM17 19h10v6H17z" fill={SKY} stroke={BLUE} /></>],
  ["Q&A", <path d="M1 3h26v17H13l-7 6v-6H1z" fill={W} stroke={BLUE} />],
  ["Smart narrative", <><path d="M4 7V1h14l6 6v20H4V16" fill={W} /><path d="M17 1v7h7" /><circle cx="5" cy="11" r="2.500" fill={SKY} stroke={BLUE} /><path d="M10 13h10M8 18h9" stroke="#1e88d2" /></>],
  ["Metrics", <><path d="M7 1h14v12c-2 6-12 6-14 0zM7 3H1v4c0 4 3 5 6 5M21 3h6v4c0 4-3 5-6 5M12 18v6h4v-6" fill={W} /><path d="M7 1h14v3H7zM8 24h12l1 3H7z" fill={SKY} stroke={BLUE} /></>],

  ["Paginated report", <><path d="M3 0h14l7 7v21H3z" fill={W} strokeWidth="2" /><path d="M16 0v8h8" strokeWidth="2" /><path d="M6 17h4v9H6zM12 21h3v5h-3zM17 14h4v12h-4z" fill={INK} stroke="none" /></>],
  ["Card (new)", <><path d="M16 5h11v20H1v-6" fill={W} strokeWidth="2" /><text x="15" y="19" fontSize="12" textAnchor="middle" fill={LETTER} stroke="none">123</text><path d="M5 22h19" stroke={MID} strokeWidth="1" /><path d="M5 1h7L9 7h3L1 17l3-8H0z" fill="#fcd482" stroke="#e06c00" /></>],
  ["Slicer (new)", <><path d="M15 2h11v11H15zM2 16h11v11H2z" fill={W} stroke={MID} /><path d="M9 5h5v8H9z" fill={SKY} stroke={BLUE} /><path d="M15 16h13l-5 5v8h-4v-8z" fill={W} /><path d="M5 1h7L9 7h3L1 17l3-8H0z" fill="#fcd482" stroke="#e06c00" /></>],
  ["ArcGIS maps", <><path d="M3 3h24v8l-7 5-2 11H2V8z" fill={W} stroke={BLUE} strokeWidth="2" /><path d="M27 3v7l-9 6-5 11H9l3-10 6-3 1-6z" fill={SKY} stroke={BLUE} /><path d="M19 16h9v12h-9z" fill="#f4f4f4" stroke="none" /><path d="M0 1h9v9l-4.500 7L0 10z" fill="#e06c00" stroke="none" /><circle cx="4.500" cy="6" r="2" fill="#fff" stroke="none" /><circle cx="23" cy="25" r="4" fill="#e06c00" stroke="none" /><circle cx="26" cy="17" r="2.500" fill="#e06c00" stroke="none" /></>],
  ["Power Apps", <><path d="M11 2h6l11 12-11 12h-6L0 14z" fill={W} stroke="#8b2a99" /><path d="M11 8l5-5 5 5-5 6zM11 20l5 5 5-5-5-6zM16 14l5-6 6 6-6 6zM11 8l5 6-5 6" stroke="#8b2a99" /></>],
  ["Power Automate", <><path d="M1 2h18l9 12-9 12H1l9-12z" fill={W} stroke="#0f78d4" /><path d="M6 8l8-6M3 24L19 3M10 25L23 7" stroke="#0f78d4" /></>],
];

const Chevrons = () => (
  <svg viewBox="0 0 12 12" className="size-3" fill="none" stroke="#242424" strokeWidth="1.600">
    <path d="M1 1l5 5-5 5M6 1l5 5-5 5" />
  </svg>
);

const Toggle = ({ label, on = false }: { label: string; on?: boolean }) => (
  <label className="flex h-10 items-center justify-between pr-6 text-[17px]">
    {label}
    <input type="checkbox" role="switch" defaultChecked={on} className="sr-only" />
    {on ? (
      <span className="flex h-6 w-12 items-center justify-between rounded-full bg-[#117865] pl-[7px] pr-1.5 text-sm text-white">
        On
        <span className="size-3 rounded-full bg-white" />
      </span>
    ) : (
      <span className="flex h-6 w-12 items-center justify-between rounded-full border border-[#616161] pl-1.5 pr-[5px] text-sm text-[#616161]">
        <span className="size-3 rounded-full bg-[#616161]" />
        Off
      </span>
    )}
  </label>
);

const VizPanel = () => (
  <aside className="flex w-[272px] shrink-0 flex-col border-x border-[#d1d1d1] text-[#242424]">
    <div className="flex h-[57px] items-center justify-between pl-3 pr-[15px]">
      <h2 className="text-[22px] font-semibold leading-8">Visualizations</h2>
      <button type="button" aria-label="Collapse visualizations">
        <Chevrons />
      </button>
    </div>
    <h3 className="h-7 pl-3 text-[17px] font-semibold leading-6">Build visual</h3>
    <div className="mt-px flex gap-[50px] pl-3">
      <button type="button" aria-label="Build visual" className="flex size-12 items-center justify-center rounded bg-white">
        <svg viewBox="0 0 36 38" className="h-[38px] w-9" fill="none">
          <path d="M0 1h29" stroke="#797775" strokeWidth="2" />
          <path d="M2 10h32v10H2zM2 27h32v9H2z" fill="#117865" />
          <path d="M1 9h34v12H1zM1 26h34v11H1z" stroke="#616161" strokeWidth="2" strokeDasharray="3 2.500" />
        </svg>
      </button>
      <button type="button" aria-label="Format visual" className="flex size-12 items-center justify-center">
        <svg viewBox="0 0 36 38" className="h-[38px] w-9" fill="none" stroke="#616161" strokeWidth="1.600">
          <path d="M6 37H1V1h15l10 10v4M15 1v11h11" />
          <path d="M36 14L22 26l3 4zM22 26c-6-2-6 8-13 9 7 4 17 2 16-5z" fill="#f4f4f4" />
        </svg>
      </button>
    </div>
    <svg viewBox="0 0 270 14" className="mt-1.5 h-3.5 w-full" fill="none" stroke="#d1d1d1" strokeWidth="1.200">
      <path d="M0 13h24L36 1l12 12h222" />
    </svg>
    <div className="mt-4 grid grid-cols-[repeat(6,28px)] gap-3.5 pl-4">
      {gallery.map(([name, art]) => (
        <button key={name} type="button" aria-label={name} className="size-7">
          <Viz>{art}</Viz>
        </button>
      ))}
    </div>
    <button type="button" aria-label="Get more visuals" className="ml-[22px] mt-[25px] flex gap-[3px]">
      <span className="size-[3px] rounded-full bg-[#242424]" />
      <span className="size-[3px] rounded-full bg-[#242424]" />
      <span className="size-[3px] rounded-full bg-[#242424]" />
    </button>
    <div className="mt-[27px] flex flex-1 border-t border-[#d9d9d9]">
      <div className="flex-1 pl-1.5">
        <p className="pl-3 pt-[11px] text-[17px] leading-7">Values</p>
        <div className="mt-1.5 flex h-[42px] items-center rounded-sm border border-dashed border-[#c8c8c8] pb-0.5 pl-[15px] text-[17px]">
          Add data fields here
        </div>
        <div className="pl-3">
          <h3 className="mt-[14px] text-[17px] font-semibold leading-7">Drill through</h3>
          <div className="pt-[3px]">
            <Toggle label="Cross-report" />
            <Toggle label="Keep all filters" on />
          </div>
        </div>
        <div className="mt-[7px] h-1.5 border border-b-0 border-dashed border-[#c8c8c8] bg-white" />
      </div>
      <div className="mt-[3px] h-[189px] w-[9px] rounded-full bg-[#616161]" />
    </div>
  </aside>
);

const DataPanel = () => (
  <aside className="w-[270px] shrink-0 text-[#242424]">
    <div className="flex h-[57px] items-center justify-between pl-3 pr-4">
      <h2 className="text-[22px] font-semibold leading-8">Data</h2>
      <button type="button" aria-label="Collapse data">
        <Chevrons />
      </button>
    </div>
    <label className="ml-1.5 mr-1.5 mt-[11px] flex h-9 items-center rounded-md border border-[#d1d1d1] border-b-[#616161] bg-white pl-[18px]">
      <svg viewBox="0 0 22 22" className="size-[22px] shrink-0" fill="none" stroke="#616161" strokeWidth="1.600">
        <circle cx="9" cy="9" r="8" />
        <path d="M15 15l6 6" />
      </svg>
      <input aria-label="Search data" placeholder="Search" className="ml-[9px] w-full bg-transparent text-[19px] leading-7 outline-none placeholder:text-[#707070]" />
    </label>
    <button type="button" className="ml-[26px] mt-[18px] flex items-center text-[17px] leading-7">
      <svg viewBox="0 0 8 12" className="h-3 w-2" fill="none" stroke="#424242" strokeWidth="1.400">
        <path d="M1 1l5 5-5 5" />
      </svg>
      <svg viewBox="0 0 20 20" className="ml-[9px] size-5" fill="none" stroke="#242424" strokeWidth="1.600">
        <rect x="1" y="1" width="18" height="18" rx="3.500" />
        <path d="M1 6h18M1 14h18M6 1v18M14 1v18" />
      </svg>
      <span className="ml-[7px]">Sheet1</span>
    </button>
  </aside>
);

/* ---------- status bar ---------- */

const StatusBar = () => (
  <footer className="flex h-[35px] items-center justify-between border-t border-[#d1d1d1] pl-1.5 pr-7 text-[17px] text-[#424242]">
    <span className="pt-1">Page 1 of 6</span>
    <div className="flex items-center">
      <button type="button" aria-label="Zoom out" className="h-0.5 w-1.5 bg-[#424242]" />
      <div className="relative ml-[7px] flex h-5 w-[150px] items-center">
        <span className="absolute inset-x-0 h-px bg-[#424242]" />
        <span className="absolute left-[74px] h-2 w-0.5 bg-[#424242]" />
        <input
          type="range"
          aria-label="Zoom level"
          defaultValue={30}
          className="relative h-5 w-full appearance-none bg-transparent [&::-webkit-slider-thumb]:h-[17px] [&::-webkit-slider-thumb]:w-1.5 [&::-webkit-slider-thumb]:appearance-none [&::-webkit-slider-thumb]:bg-[#424242]"
        />
      </div>
      <button type="button" aria-label="Zoom in" className="ml-2">
        <svg viewBox="0 0 12 12" className="size-3" stroke="#424242" strokeWidth="2">
          <path d="M0 6h12M6 0v12" />
        </svg>
      </button>
      <span className="ml-5">66%</span>
      <button type="button" aria-label="Fit to page" className="ml-[30px]">
        <svg viewBox="0 0 22 16" className="h-4 w-[22px]" fill="none" stroke="#424242" strokeWidth="1.600">
          <rect x="1" y="1" width="20" height="14" rx="2" />
          <path d="M4 6V4h3M15 4h3v2M18 10v2h-3M7 12H4v-2" />
        </svg>
      </button>
    </div>
  </footer>
);

/* ---------- taskbar ---------- */

const App24 = ({ children }: Kids) => (
  <svg viewBox="0 0 24 24" className="size-6 overflow-visible">
    {children}
  </svg>
);

const Office = ({ a, b, c, d, tile, ch }: { a: string; b: string; c: string; d: string; tile: string; ch: string }) => (
  <App24>
    <path d="M6 1h18v22H6z" fill={b} />
    <path d="M6 1h18v6H6z" fill={a} />
    <path d="M6 12h18v6H6z" fill={c} />
    <path d="M6 18h18v5H6z" fill={d} />
    <path d="M0 5h14v14H0z" fill={tile} />
    <text x="7" y="16.500" fontSize="12" fontWeight="700" textAnchor="middle" fill="#fff">
      {ch}
    </text>
  </App24>
);

const petal = "M0 0C-9-3-11-9-7-12c3-2 6-1 7 2 1-3 4-4 7-2 4 3 2 9-7 12z";

const apps: { name: string; open?: boolean; active?: boolean; art: React.ReactNode }[] = [
  {
    name: "Edge",
    art: (
      <App24>
        <defs>
          <linearGradient id="edg" x1="0" y1="0" x2="1" y2=".4">
            <stop offset="0" stopColor="#1a9de6" />
            <stop offset=".6" stopColor="#2cc3b5" />
            <stop offset="1" stopColor="#66e04e" />
          </linearGradient>
        </defs>
        <circle cx="12" cy="12" r="12" fill="#0c63b8" />
        <path d="M0 12C0 5 6 0 12 0c7 0 12 5 12 10 0 4-3 6-7 6-3 0-3-1-2-3 1-3-2-5-5-5-5 0-9 2-10 4z" fill="url(#edg)" />
        <path d="M0 13c1-4 5-5 9-5-3 2-3 10 3 15C5 24 0 19 0 13z" fill="#1683d8" />
        <path d="M9 12c-1 6 6 9 13 6-3 4-7 6-11 5-5-2-5-8-2-11z" fill="#144f8f" />
      </App24>
    ),
  },
  {
    name: "File Explorer",
    open: true,
    art: (
      <App24>
        <path d="M1 3h9l2 3h11v17H1z" fill="#e5a50e" />
        <path d="M1 7h22v15H1z" fill="#ffd766" />
        <path d="M5 22v-9h14v9h-4v-4H9v4z" fill="#3b97dc" />
      </App24>
    ),
  },
  {
    name: "Store",
    art: (
      <App24>
        <path d="M7 6V2h11v4" fill="none" stroke="#2aa8e0" strokeWidth="2" />
        <path d="M1 6h22v15q0 2-2 2H3q-2 0-2-2z" fill="#f0f0f0" />
        <path d="M7 10h4v4H7z" fill="#f25022" />
        <path d="M13 10h4v4h-4z" fill="#7fba00" />
        <path d="M7 16h4v4H7z" fill="#00a4ef" />
        <path d="M13 16h4v4h-4z" fill="#ffb900" />
      </App24>
    ),
  },
  {
    name: "Brave",
    art: (
      <App24>
        <path d="M6 0h12l4 5-1 11-4 5-5 3-5-3-4-5L2 5z" fill="#f7400f" />
        <path d="M8 4h8l3 4-2 6 1 3-6 5-6-5 1-3-2-6z" fill="#fff" />
        <path d="M7 9l4 1-1 3 2 1 2-1-1-3 4-1M9 17l3-1 3 1" fill="none" stroke="#f7400f" strokeWidth="1.500" />
      </App24>
    ),
  },
  {
    name: "Outlook",
    art: (
      <App24>
        <path d="M4 7l9-6 11 7v13q0 2-2 2H6z" fill="#1490df" />
        <path d="M10 4l4-3 10 7-10 9z" fill="#0a55a5" />
        <path d="M24 9v12q0 2-2 2H8z" fill="#35c0f2" />
        <path d="M0 5h14v14H0z" fill="#0f6fc6" />
        <circle cx="7" cy="12" r="3.500" fill="none" stroke="#fff" strokeWidth="2" />
      </App24>
    ),
  },
  {
    name: "ChatGPT",
    open: true,
    art: (
      <App24>
        <g fill="none" stroke="#fff" strokeWidth="1.500" transform="translate(12 12)">
          {[0, 60, 120, 180, 240, 300].map((r) => (
            <path key={r} transform={`rotate(${r})`} d="M-4-2.500V-7c0-5 7-6 9-2M-4-6.500L0-4l5 3v5" />
          ))}
        </g>
      </App24>
    ),
  },
  {
    name: "Chrome",
    open: true,
    art: (
      <App24>
        <circle cx="12" cy="12" r="12" fill="#fbc116" />
        <path d="M12 12L1.600 6A12 12 0 0 1 22.400 6z" fill="#e33b2e" />
        <path d="M12 12L1.600 6A12 12 0 0 0 12 24l5-9z" fill="#2da94f" />
        <circle cx="12" cy="12" r="6" fill="#fff" />
        <circle cx="12" cy="12" r="4.500" fill="#3b7ded" />
      </App24>
    ),
  },
  { name: "OneNote", art: <Office a="#c65bea" b="#b04ad6" c="#8f35bd" d="#7a22a8" tile="#7719aa" ch="N" /> },
  {
    name: "Remote Desktop",
    art: (
      <App24>
        <path d="M3 1l16 1 2 14-16 2z" fill="#c9ced6" />
        <path d="M5 3l12 1 2 10-12 2z" fill="#1b2fc4" />
        <path d="M5 20l8-3 5 3-7 4z" fill="#d8d8d8" />
        <circle cx="18" cy="18" r="5.500" fill="#e8efe6" />
        <path d="M15 16l3 2-2 3M21 15l-3 2 2 3" fill="none" stroke="#2f9e4f" strokeWidth="1.400" />
      </App24>
    ),
  },
  { name: "Excel", open: true, art: <Office a="#33c481" b="#21a366" c="#107c41" d="#185c37" tile="#107c41" ch="X" /> },
  {
    name: "Power BI",
    open: true,
    active: true,
    art: (
      <App24>
        <path d="M13 0h9v24h-9z" fill="#d9930f" />
        <path d="M8 6h9v18H8z" fill="#efbf2b" />
        <path d="M3 12h9v12H3z" fill="#f9dc68" />
      </App24>
    ),
  },
  { name: "Word", open: true, art: <Office a="#41a5ee" b="#2b7cd3" c="#185abd" d="#103f91" tile="#185abd" ch="W" /> },
];

const Taskbar = () => (
  <div className="flex h-[47px] items-stretch border-t border-black bg-linear-to-r from-[#23383f] from-60% to-[#1b2744] text-white">
    <button type="button" aria-label="Start" className="flex w-[54px] items-center justify-center">
      <svg viewBox="0 0 24 24" className="size-6" fill="#fff">
        <path d="M0 3.500l10-1.500v9.500H0zM11 2l13-2v11.500H11zM0 12.500h10V22L0 20.500zM11 12.500h13V24l-13-2z" />
      </svg>
    </button>
    <label className="relative flex w-[387px] items-center border-2 border-[#bdbdbd] bg-[#f1f1f1] pl-4">
      <svg viewBox="0 0 24 24" className="size-6 shrink-0" fill="none" stroke="#111" strokeWidth="1.700">
        <circle cx="16" cy="8" r="7.500" />
        <path d="M11 13.500L1 23.500" />
      </svg>
      <input aria-label="Search Windows" placeholder="Search" className="ml-[18px] w-52 bg-transparent pt-1 text-[21px] leading-7 outline-none placeholder:text-[#242424]" />
      <svg viewBox="0 0 68 42" className="absolute bottom-0 right-2.5 h-[42px] w-[68px] overflow-hidden">
        <path d="M24 22q8 8 9 20M50 18Q38 24 33 42" fill="none" stroke="#8aa83a" strokeWidth="2" />
        <g fill="#5aa126">
          <path d={petal} transform="translate(20 18) rotate(15) scale(1.4)" />
          <path d={petal} transform="translate(19 18) rotate(-75) scale(1.4)" fill="#72b53a" />
          <path d={petal} transform="translate(19 18) rotate(165) scale(1.6)" fill="#3d8516" />
          <path d={petal} transform="translate(49 19) rotate(-10) scale(1.2)" fill="#72b53a" />
          <path d={petal} transform="translate(49 20) rotate(80) scale(1.3)" />
          <path d={petal} transform="translate(49 20) rotate(205) scale(1.2)" fill="#3d8516" />
        </g>
      </svg>
    </label>
    <button type="button" aria-label="Task view" className="flex w-[57px] items-center justify-center pr-1">
      <svg viewBox="0 0 24 24" className="size-6" fill="none" stroke="#fff" strokeWidth="1.500">
        <path d="M1 7h15v10H1zM1 0v3h15V0M1 24v-3h15v3M22 0v6M22 12v12" />
        <path d="M20.500 7h3v3h-3z" fill="#fff" stroke="none" />
      </svg>
    </button>
    {apps.map((a) => (
      <button
        key={a.name}
        type="button"
        aria-label={a.name}
        className={"relative mx-px flex w-[55px] items-center justify-center " + (a.active ? "bg-[#4b5b65]" : "")}
      >
        {a.art}
        {a.open && (
          <span className={"absolute bottom-0 h-[3px] bg-[#76b9ed] " + (a.active ? "inset-x-0" : "inset-x-1.5")} />
        )}
      </button>
    ))}
    <div className="ml-auto flex items-center pr-1.5 text-[17px]">
      <button type="button" className="flex items-center text-xl">
        <svg viewBox="0 0 38 36" className="h-9 w-[38px]">
          <path d="M4 23c8 4 17 0 18-9 10 1 14 10 9 17-6 8-22 5-27-8z" fill="#f39a21" />
          <path d="M4 15c-5 0-5-8 1-8 0-7 10-8 12-1 6 0 6 9 0 9z" fill="#a9c8f7" />
          <circle cx="27" cy="10" r="9" fill="#c42b1c" />
          <text x="27" y="15" fontSize="14" textAnchor="middle" fill="#fff">
            1
          </text>
        </svg>
        <span className="ml-2.5">29°C</span>
      </button>
      <svg viewBox="0 0 18 12" className="ml-7 h-3 w-[18px]" fill="none" stroke="#fff" strokeWidth="1.500">
        <path d="M1 10l8-8 8 8" />
      </svg>
      <svg viewBox="0 0 18 24" className="ml-5 h-6 w-[18px]" fill="none" stroke="#fff" strokeWidth="1.400">
        <rect x="1" y="6" width="11" height="12" rx="2" />
        <path d="M12 11l4-3v8l-4-3M3 3q4-3 9 0M3 21q4 3 9 0" />
      </svg>
      <svg viewBox="0 0 24 14" className="ml-3.5 h-3.5 w-6" fill="none" stroke="#fff" strokeWidth="1.400">
        <path d="M1 1h20v12H1zM21 5h2v4h-2" />
        <path d="M3 3h11v8H3z" fill="#fff" stroke="none" />
      </svg>
      <svg viewBox="0 0 20 20" className="ml-3.5 size-5" fill="none" stroke="#fff" strokeWidth="1.400">
        <path d="M1 19A18 18 0 0 1 19 1M6 19A13 13 0 0 1 19 6.500M11 19a8 8 0 0 1 8-7.500" />
        <circle cx="17.500" cy="17.500" r="2" fill="#fff" stroke="none" />
      </svg>
      <svg viewBox="0 0 24 18" className="ml-3.5 h-[18px] w-6" fill="none" stroke="#fff" strokeWidth="1.400">
        <path d="M1 6h3l6-5v16l-6-5H1zM13 6q3 3 0 6M16 4q5 5 0 10M19 1q7 8 0 16" />
      </svg>
      <span className="ml-4">ENG</span>
      <span className="ml-[22px]">10:53 PM</span>
      <button type="button" aria-label="Notifications" className="ml-7">
        <svg viewBox="0 0 24 24" className="size-6">
          <path d="M0 0h24v19h-7l-5 5-5-5H0z" fill="#fff" />
          <path d="M5 5h14M5 9h14M5 13h9" stroke="#1b2744" strokeWidth="1.500" />
        </svg>
      </button>
      <span className="ml-[31px] h-[46px] w-px bg-[#7c8494]" />
    </div>
  </div>
);

export default function App() {
  return (
    <div className="flex min-h-screen flex-col bg-[#f4f4f4] font-['Open_Sans',sans-serif]">
      <Header />
      <Ribbon />
      <main className="flex flex-1">
        <Rail />
        <div className="flex min-w-0 flex-1 flex-col bg-white">
          <Canvas />
          <Tabs />
        </div>
        <VizPanel />
        <DataPanel />
      </main>
      <StatusBar />
      <Taskbar />
    </div>
  );
}
